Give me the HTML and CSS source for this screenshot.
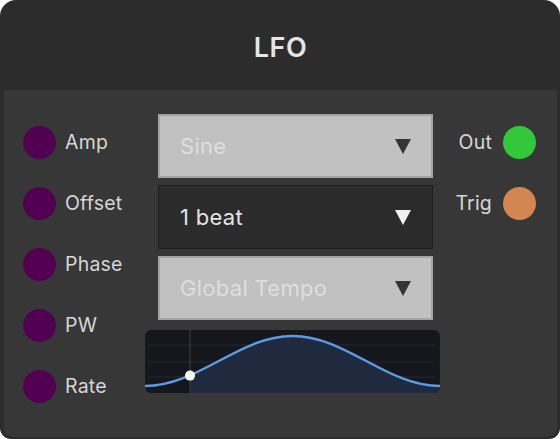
FILE: index.html
```html
<!DOCTYPE html>
<html lang="en">
<head>
    <meta charset="UTF-8">
    <meta name="viewport" content="width=device-width, initial-scale=1.0">
    <title>LFO</title>
    <link rel="stylesheet" href="styles.css">
</head>
<body>
    <div class="node">
        <div class="node-header">LFO</div>

        <div class="node-body">
            <!-- Input ports -->
            <div class="ports ports-in">
                <div class="port"><span class="jack jack-in"></span><span class="port-label">Amp</span></div>
                <div class="port"><span class="jack jack-in"></span><span class="port-label">Offset</span></div>
                <div class="port"><span class="jack jack-in"></span><span class="port-label">Phase</span></div>
                <div class="port"><span class="jack jack-in"></span><span class="port-label">PW</span></div>
                <div class="port"><span class="jack jack-in"></span><span class="port-label">Rate</span></div>
            </div>

            <!-- Settings and waveform preview -->
            <div class="controls">
                <div class="select select-disabled">
                    <span>Sine</span>
                    <svg class="arrow" viewBox="0 0 16 15"><polygon points="0,0 16,0 8,15"/></svg>
                </div>
                <div class="select select-active">
                    <span>1 beat</span>
                    <svg class="arrow" viewBox="0 0 16 15"><polygon points="0,0 16,0 8,15"/></svg>
                </div>
                <div class="select select-disabled">
                    <span>Global Tempo</span>
                    <svg class="arrow" viewBox="0 0 16 15"><polygon points="0,0 16,0 8,15"/></svg>
                </div>

                <div class="wave">
                    <svg viewBox="0 0 295 63" width="295" height="63">
                        <defs>
                            <clipPath id="played">
                                <rect x="45" y="0" width="250" height="63"/>
                            </clipPath>
                        </defs>
                        <path class="wave-fill" clip-path="url(#played)"
                              d="M0,56 C53.7,56 93.8,6 147.5,6 S241.3,56 295,56 L295,63 L0,63 Z"/>
                        <line class="grid" x1="3" y1="15" x2="290" y2="15"/>
                        <line class="grid" x1="3" y1="32" x2="290" y2="32"/>
                        <line class="grid" x1="3" y1="47" x2="290" y2="47"/>
                        <line class="playhead" x1="45" y1="0" x2="45" y2="63"/>
                        <path class="wave-line" d="M0,56 C53.7,56 93.8,6 147.5,6 S241.3,56 295,56"/>
                        <circle class="wave-dot" cx="45" cy="45.6" r="5"/>
                    </svg>
                </div>
            </div>

            <!-- Output ports -->
            <div class="ports ports-out">
                <div class="port"><span class="port-label">Out</span><span class="jack jack-out"></span></div>
                <div class="port"><span class="port-label">Trig</span><span class="jack jack-trig"></span></div>
            </div>
        </div>
    </div>
</body>
</html>
```

FILE: styles.css
```css
body {
    margin: 0;
    background-color: #ffffff;
    font-family: Inter, "Noto Sans", sans-serif;
}
.node {
    width: 560px;
    height: 439px;
    box-sizing: border-box;
    background-color: #2c2c2c;
    border-radius: 16px 16px 11px 11px;
    padding: 0 3px 2px 4px;
    display: flex;
    flex-direction: column;
    overflow: hidden;
}
.node-header {
    height: 90px;
    flex-shrink: 0;
    display: flex;
    align-items: center;
    justify-content: center;
    color: #e6e6e6;
    font-size: 27px;
    font-weight: 600;
    letter-spacing: 0.6px;
    padding-top: 4px;
    box-sizing: border-box;
}
.node-body {
    flex: 1;
    background-color: #373737;
    border-radius: 0 0 9px 9px;
    display: flex;
    padding-left: 19px;
}
.ports {
    display: flex;
    flex-direction: column;
    gap: 29px;
    padding-top: 36px;
}
.ports-in {
    width: 122px;
}
.ports-out {
    flex: 1;
    align-items: flex-end;
    padding-right: 21px;
}
.port {
    display: flex;
    align-items: center;
    gap: 9px;
    height: 32px;
}
.port-label {
    color: #d6d6d6;
    font-size: 19.5px;
    letter-spacing: 0.2px;
}
.ports-out .port {
    gap: 11px;
}
.jack {
    width: 33px;
    height: 33px;
    border-radius: 50%;
    flex-shrink: 0;
}
.jack-in {
    background-color: #520052;
}
.jack-out {
    background-color: #33c83a;
}
.jack-trig {
    background-color: #d38650;
}
.controls {
    width: 295px;
    padding-top: 24px;
    display: flex;
    flex-direction: column;
    gap: 7px;
}
.select {
    height: 64px;
    margin: 0 7px 0 13px;
    box-sizing: border-box;
    display: flex;
    align-items: center;
    justify-content: space-between;
    padding: 0 20px 0 20px;
    font-size: 22px;
    letter-spacing: 0.3px;
}
.select-disabled {
    background-color: #c1c1c1;
    border: 2px solid #a3a3a3;
    color: #dedede;
}
.select-disabled .arrow {
    fill: #343434;
}
.select-active {
    background-color: #2b2b2b;
    border: 1px solid #1e1e1e;
    color: #e4e4e4;
    padding-left: 21px;
    padding-right: 21px;
}
.select-active .arrow {
    fill: #f0f0f0;
}
.arrow {
    width: 16px;
    height: 15px;
}
.wave {
    margin-top: 3px;
    width: 295px;
    height: 63px;
    background-color: #16171c;
    border-radius: 6px;
    overflow: hidden;
}
.wave svg {
    display: block;
}
.wave-fill {
    fill: #1f2a41;
}
.grid {
    stroke: #262830;
    stroke-width: 1;
}
.playhead {
    stroke: #3d3f46;
    stroke-width: 1;
}
.wave-line {
    fill: none;
    stroke: #5b9be4;
    stroke-width: 2.5;
}
.wave-dot {
    fill: #ffffff;
}
```
